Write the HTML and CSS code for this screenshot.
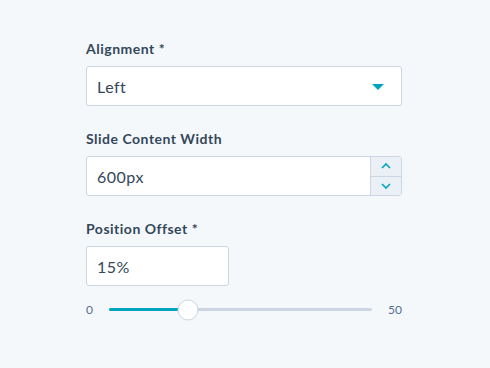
FILE: index.html
```
<!DOCTYPE html>
<html>
<head>
<meta charset="utf-8">
<link rel="stylesheet" href="styles.css">
</head>
<body>
<div class="panel">
  <div class="field">
    <label class="label">Alignment *</label>
    <div class="control select">
      <span class="value">Left</span>
      <svg class="caret" width="12" height="6" viewBox="0 0 12 6"><path d="M0 0 H12 L6 6 Z" fill="#00a4bd"/></svg>
    </div>
  </div>
  <div class="field">
    <label class="label">Slide Content Width</label>
    <div class="control number">
      <span class="value">600px</span>
      <div class="spinner">
        <div class="spin up"><svg width="10" height="6" viewBox="0 0 10 6"><path d="M1 5 L5 1 L9 5" fill="none" stroke="#00a4bd" stroke-width="1.6"/></svg></div>
        <div class="spin"><svg width="10" height="6" viewBox="0 0 10 6"><path d="M1 1 L5 5 L9 1" fill="none" stroke="#00a4bd" stroke-width="1.6"/></svg></div>
      </div>
    </div>
  </div>
  <div class="field">
    <label class="label">Position Offset *</label>
    <div class="control short">
      <span class="value">15%</span>
    </div>
    <div class="slider">
      <span class="tick">0</span>
      <div class="track">
        <div class="fill" style="width:30%"></div>
        <div class="thumb" style="left:30%"></div>
      </div>
      <span class="tick">50</span>
    </div>
  </div>
</div>
</body>
</html>
```
FILE: styles.css
```
html, body {
  margin: 0;
  padding: 0;
  background: #f5f8fa;
}
body {
  font-family: Lato, "Open Sans", sans-serif;
  color: #33475b;
  width: 490px;
  height: 368px;
}
.panel {
  padding: 40px 0 0 86px;
  width: 316px;
  display: flex;
  flex-direction: column;
  gap: 24px;
}
.field {
  display: flex;
  flex-direction: column;
}
.label {
  font-size: 14px;
  font-weight: 700;
  line-height: 18px;
  margin-bottom: 8px;
  letter-spacing: 0.5px;
}
.control {
  box-sizing: border-box;
  height: 40px;
  background: #fff;
  border: 1px solid #cbd6e2;
  border-radius: 3px;
  display: flex;
  align-items: center;
  padding-left: 10px;
  font-size: 16px;
}
.value {
  letter-spacing: 0.5px;
}
.select {
  justify-content: space-between;
  padding-right: 17px;
}
.caret {
  margin-top: 1px;
}
.number {
  padding-right: 0;
  justify-content: space-between;
  overflow: hidden;
}
.spinner {
  width: 30px;
  height: 100%;
  border-left: 1px solid #cbd6e2;
  background: #eaf0f6;
  display: flex;
  flex-direction: column;
}
.spin {
  flex: 1;
  display: flex;
  align-items: center;
  justify-content: center;
}
.spin.up {
  border-bottom: 1px solid #cbd6e2;
}
.short {
  width: 143px;
}
.slider {
  margin-top: 16px;
  display: flex;
  align-items: center;
  gap: 16px;
  font-size: 12px;
  color: #516f90;
}
.track {
  flex: 1;
  position: relative;
  height: 3px;
  background: #cbd6e2;
  border-radius: 2px;
}
.fill {
  height: 100%;
  background: #00a4bd;
  border-radius: 2px;
}
.thumb {
  position: absolute;
  top: 50%;
  width: 21px;
  height: 21px;
  box-sizing: border-box;
  border: 1px solid #cbd6e2;
  border-radius: 50%;
  background: #fff;
  transform: translate(-50%, -50%);
}
```
